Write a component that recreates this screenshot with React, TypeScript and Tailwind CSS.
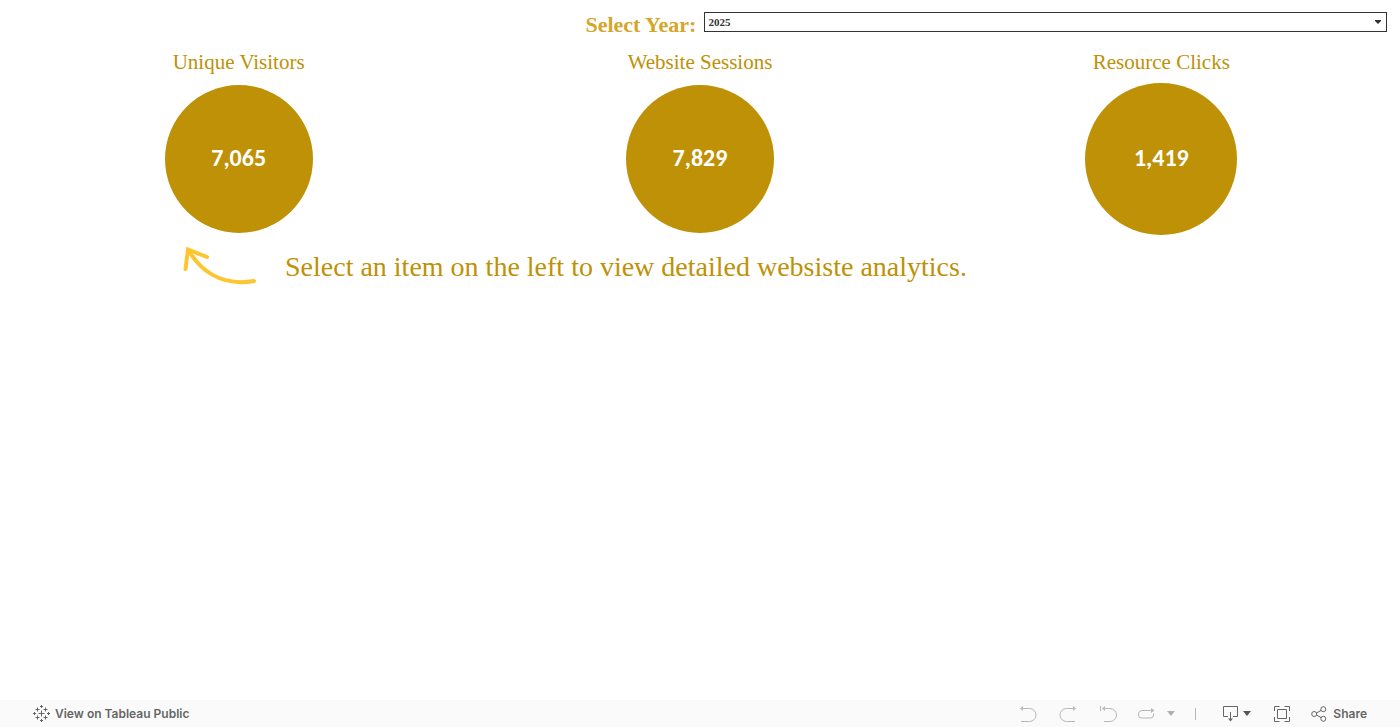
import { useState } from "react"

const serif = "font-['Liberation_Serif',serif]"

const stats = [
  { label: "Unique Visitors", value: "7,065", size: "size-[148px]" },
  { label: "Website Sessions", value: "7,829", size: "size-[148px]" },
  { label: "Resource Clicks", value: "1,419", size: "size-[152px]" },
]

function TableauIcon() {
  return (
    <svg width="17" height="17" viewBox="0 0 17 17" fill="none" stroke="#666" aria-hidden="true">
      <path d="M8.5 5.5v6M5.5 8.5h6M4.5 2.5v4M2.5 4.5h4M12.5 2.5v4M10.5 4.5h4M4.5 10.5v4M2.5 12.5h4M12.5 10.5v4M10.5 12.5h4M8.5 0v3M7 1.5h3M8.5 14v3M7 15.5h3M1.5 7v3M0 8.5h3M15.5 7v3M14 8.5h3" />
    </svg>
  )
}

function UndoIcon() {
  return (
    <svg width="18" height="18" viewBox="0 0 18 18" fill="none" stroke="#b8b8b8" aria-hidden="true">
      <path d="M2 3.5h8.5a6 6 0 0 1 0 13H2" />
      <path d="M1 3.5l3-2.5v5z" fill="#b8b8b8" stroke="none" />
    </svg>
  )
}

function RedoIcon() {
  return (
    <svg width="18" height="18" viewBox="0 0 18 18" fill="none" stroke="#b8b8b8" aria-hidden="true">
      <path d="M16 3.5H7.5a6 6 0 0 0 0 13H16" />
      <path d="M17 3.5l-3-2.5v5z" fill="#b8b8b8" stroke="none" />
    </svg>
  )
}

function RevertIcon() {
  return (
    <svg width="18" height="18" viewBox="0 0 18 18" fill="none" stroke="#b8b8b8" aria-hidden="true">
      <path d="M1.5 1v5M4 3.5h7a6 6 0 0 1 0 13H5" />
      <path d="M3 3.5l3-2.5v5z" fill="#b8b8b8" stroke="none" />
    </svg>
  )
}

function RefreshIcon() {
  return (
    <svg width="18" height="18" viewBox="0 0 18 18" fill="none" stroke="#b8b8b8" aria-hidden="true">
      <path d="M14 5.5H5a3.5 3.5 0 0 0-3.5 3.5v1a3 3 0 0 0 3 3h9a3 3 0 0 0 3-3V8.5" />
      <path d="M17.500 5.500l-3.500-2.500v5z" fill="#b8b8b8" stroke="none" />
    </svg>
  )
}

function Caret({ color }: { color: string }) {
  return (
    <svg width="8" height="5" viewBox="0 0 8 5" fill={color} aria-hidden="true">
      <path d="M0 0h8L4 5z" />
    </svg>
  )
}

function DownloadIcon() {
  return (
    <svg width="18" height="18" viewBox="0 0 18 18" fill="none" stroke="#666" aria-hidden="true">
      <path d="M6 11.5H1.5v-10h14v10H11M8.5 7v8" />
      <path d="M6 13.5h5l-2.5 3z" fill="#666" stroke="none" />
    </svg>
  )
}

function FullScreenIcon() {
  return (
    <svg width="18" height="18" viewBox="0 0 18 18" fill="none" stroke="#666" aria-hidden="true">
      <path d="M4.5 4.5h9v9h-9zM1.5 6v-4.5h5M11.5 1.5h5v4.5M16.5 12v4.5h-5M6.500 16.5h-5v-4.5" />
    </svg>
  )
}

function ShareIcon() {
  return (
    <svg width="16" height="16" viewBox="0 0 16 16" fill="none" stroke="#666" aria-hidden="true">
      <circle cx="3.2" cy="8" r="2.5" />
      <circle cx="12.3" cy="3.2" r="2.5" />
      <circle cx="12.3" cy="12.8" r="2.5" />
      <path d="M5.5 7l4.6-2.6M5.5 9l4.6 2.6" />
    </svg>
  )
}

function ArrowDrawing() {
  return (
    <svg
      width="76"
      height="40"
      viewBox="0 0 76 40"
      fill="none"
      stroke="#fdc52f"
      strokeWidth="4"
      strokeLinecap="round"
      aria-hidden="true"
    >
      <path d="M4.5 22L7 2.500L26 10" />
      <path d="M8 4C18 21 38 40 73 34" />
    </svg>
  )
}

export default function App() {
  const [year, setYear] = useState("2025")

  return (
    <div className="min-h-screen flex flex-col bg-white">
      <main className={`flex-1 px-2 pt-3 ${serif}`}>
        <div className="flex gap-2 pr-[5px]">
          <label htmlFor="year" className="flex-1 pt-px text-right text-[22px] leading-6 font-bold text-[#d4a62a]">
            Select Year:
          </label>
          <div className="relative h-5 w-[49.5%]">
            <select
              id="year"
              value={year}
              onChange={(e) => setYear(e.target.value)}
              className="block w-full h-5 appearance-none border border-[#333] bg-white px-[3px] text-[11px] font-bold text-[#333]"
            >
              <option>2025</option>
              <option>2024</option>
            </select>
            <span className="pointer-events-none absolute right-1.5 top-2 flex">
              <svg width="6" height="4" viewBox="0 0 6 4" fill="#333" aria-hidden="true">
                <path d="M0 0h6v1L3 4L0 1z" />
              </svg>
            </span>
          </div>
        </div>

        <div className="grid grid-cols-3 pt-[9px]">
          {stats.map((stat) => (
            <section key={stat.label} className="flex flex-col items-center">
              <h2 className="text-[21px] leading-8 text-[#be9106]">{stat.label}</h2>
              <div className="flex h-[162px] items-center justify-center">
                <div
                  className={`flex items-center justify-center rounded-full bg-[#be9106] pb-0.5 font-[Carlito,Lato,sans-serif] text-2xl font-bold text-white ${stat.size}`}
                >
                  {stat.value}
                </div>
              </div>
            </section>
          ))}
        </div>

        <div className="flex gap-7 pl-[173px] pt-[7px]">
          <ArrowDrawing />
          <p className="text-[28px] leading-10 text-[#be9106]">
            Select an item on the left to view detailed websiste analytics.
          </p>
        </div>
      </main>

      <footer className="flex h-[27px] items-center justify-between bg-[#fafafa] px-[33px] font-[Inter,sans-serif] text-xs font-semibold text-[#666]">
        <a href="#" className="flex items-center gap-[5px]">
          <TableauIcon />
          View on Tableau Public
        </a>
        <div className="flex items-center">
          <div className="flex items-center gap-[22px]">
            <button aria-label="Undo" disabled>
              <UndoIcon />
            </button>
            <button aria-label="Redo" disabled>
              <RedoIcon />
            </button>
            <div className="flex items-center gap-5">
              <button aria-label="Revert" disabled>
                <RevertIcon />
              </button>
              <button aria-label="Refresh" disabled className="flex items-center gap-3">
                <RefreshIcon />
                <Caret color="#b0b0b0" />
              </button>
              <span className="h-3 w-px bg-[#b8b8b8]" />
            </div>
          </div>
          <button aria-label="Download" className="ml-[26px] flex items-center gap-[3px]">
            <DownloadIcon />
            <Caret color="#555" />
          </button>
          <button aria-label="Full screen" className="ml-[22px]">
            <FullScreenIcon />
          </button>
          <button className="ml-5 flex items-center gap-[6px]">
            <ShareIcon />
            Share
          </button>
        </div>
      </footer>
    </div>
  )
}
